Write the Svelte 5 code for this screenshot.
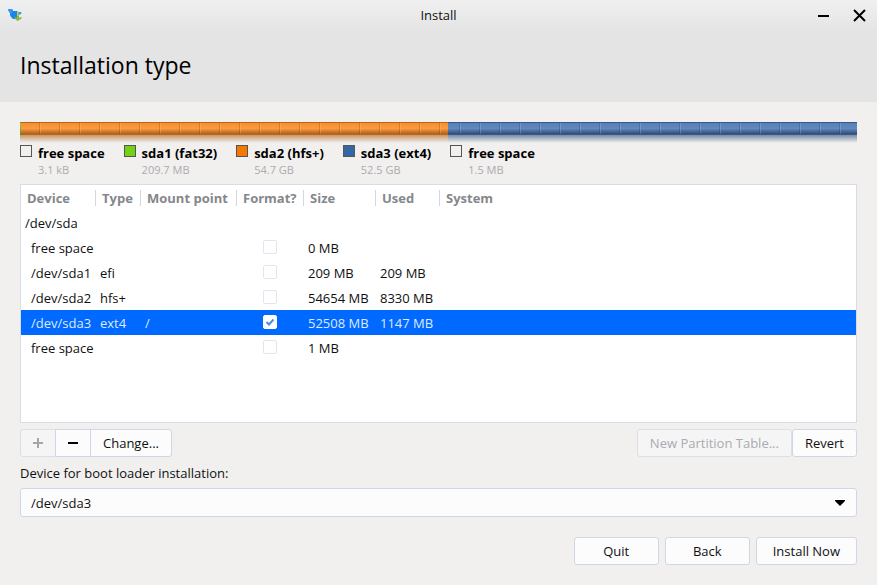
<script>
  const segments = [
    { name: 'sda1', kind: 'green', share: 1 },
    { name: 'sda2', kind: 'orange', share: 427 },
    { name: 'sda3', kind: 'blue', share: 409 }
  ];
  const legend = [
    { name: 'free space', size: '3.1 kB', color: 'transparent' },
    { name: 'sda1 (fat32)', size: '209.7 MB', color: '#73d216' },
    { name: 'sda2 (hfs+)', size: '54.7 GB', color: '#f57900' },
    { name: 'sda3 (ext4)', size: '52.5 GB', color: '#3465a4' },
    { name: 'free space', size: '1.5 MB', color: 'transparent' }
  ];
  const columns = ['Device', 'Type', 'Mount point', 'Format?', 'Size', 'Used', 'System'];
  let rows = $state([
    { device: 'free space', type: '', mount: '', format: false, size: '0 MB', used: '' },
    { device: '/dev/sda1', type: 'efi', mount: '', format: false, size: '209 MB', used: '209 MB' },
    { device: '/dev/sda2', type: 'hfs+', mount: '', format: false, size: '54654 MB', used: '8330 MB' },
    { device: '/dev/sda3', type: 'ext4', mount: '/', format: true, size: '52508 MB', used: '1147 MB' },
    { device: 'free space', type: '', mount: '', format: false, size: '1 MB', used: '' }
  ]);
  let selected = $state(3);
  let bootDevice = $state('/dev/sda3');
</script>

<div class="window">
  <header>
    <div class="titlebar">
      <svg class="logo" width="16" height="16" viewBox="0 0 16 16" aria-hidden="true">
        <path d="M1 3l1-1h3l1 2h4l1 1v6l-3 1H6L4 10 3 8 3 6z" fill="#1b84ee" />
        <path d="M1 3l1-1h3l1 2-2 3-1-1z" fill="#2f98f6" />
        <path d="M11 5h3.5l-.5 2-2 1-1 2z" fill="#3f9fc8" />
        <path d="M10 5h1.500v6H10z" fill="#c6d350" />
        <path d="M7 10.500h3V9h2v1.500l3-.5-1 2-2 1-1 1-2-1z" fill="#92b83a" />
      </svg>
      <span class="caption">Install</span>
      <div class="controls">
        <button aria-label="Minimize">
          <svg width="13" height="13" viewBox="0 0 13 13"><path d="M1 7h11" stroke="#000" stroke-width="2" /></svg>
        </button>
        <button aria-label="Close">
          <svg width="13" height="13" viewBox="0 0 13 13"><path d="M1 1l11 11M12 1L1 12" stroke="#000" stroke-width="2" /></svg>
        </button>
      </div>
    </div>
    <h1>Installation type</h1>
  </header>

  <main>
    <div class="disk">
      {#each segments as s (s.name)}
        <div class="segment {s.kind}" style="flex-grow: {s.share}">
          <div class="face"></div>
          <div class="reflection"></div>
        </div>
      {/each}
      <div class="ticks"></div>
    </div>

    <ul class="legend">
      {#each legend as item}
        <li>
          <span class="swatch" style="background: {item.color}"></span>
          <div>
            <div class="name">{item.name}</div>
            <div class="amount">{item.size}</div>
          </div>
        </li>
      {/each}
    </ul>

    <div class="list">
      <table>
        <colgroup>
          <col class="c-device" /><col class="c-type" /><col class="c-mount" /><col class="c-format" />
          <col class="c-size" /><col class="c-used" /><col />
        </colgroup>
        <thead>
          <tr>
            {#each columns as c}<th scope="col"><span>{c}</span></th>{/each}
          </tr>
        </thead>
        <tbody>
          <tr><td colspan="7">/dev/sda</td></tr>
          {#each rows as row, i}
            <tr class:selected={i === selected} onclick={() => (selected = i)}>
              <td class="child">{row.device}</td>
              <td>{row.type}</td>
              <td>{row.mount}</td>
              <td class="tick"><input type="checkbox" aria-label="Format {row.device}" bind:checked={row.format} /></td>
              <td>{row.size}</td>
              <td>{row.used}</td>
              <td></td>
            </tr>
          {/each}
        </tbody>
      </table>
    </div>

    <div class="tools">
      <div class="joined">
        <button class="btn square" disabled aria-label="Add partition">
          <svg width="12" height="12" viewBox="0 0 12 12"><path d="M1 6h10M6 1v10" stroke="#a5a5aa" stroke-width="2" /></svg>
        </button>
        <button class="btn square" aria-label="Remove partition">
          <svg width="12" height="12" viewBox="0 0 12 12"><path d="M1 6h10" stroke="#000" stroke-width="2" /></svg>
        </button>
        <button class="btn">Change...</button>
      </div>
      <div class="right">
        <button class="btn" disabled>New Partition Table...</button>
        <button class="btn">Revert</button>
      </div>
    </div>

    <label for="boot">Device for boot loader installation:</label>
    <div class="combo">
      <select id="boot" bind:value={bootDevice}>
        <option>/dev/sda3</option>
        <option>/dev/sda</option>
        <option>/dev/sda1</option>
        <option>/dev/sda2</option>
      </select>
      <svg width="10" height="6" viewBox="0 0 10 6" aria-hidden="true"><path d="M0 0h10v1L5 6 0 1z" fill="#000" /></svg>
    </div>

    <footer>
      <button class="btn wide">Quit</button>
      <button class="btn wide">Back</button>
      <button class="btn wide">Install Now</button>
    </footer>
  </main>
</div>

<style>
  :global(body) {
    margin: 0;
    background: #f1f0ee;
  }
  .window {
    min-height: 100vh;
    box-sizing: border-box;
    background: #f1f0ee;
    color: #101010;
    font: 13px/18px "Open Sans", "Noto Sans", sans-serif;
  }
  button,
  select {
    font: inherit;
    color: inherit;
  }
  header {
    background: linear-gradient(#f0f0f0, #e4e4e4 32px);
    padding-bottom: 20px;
  }
  .titlebar {
    display: grid;
    grid-template-columns: 1fr auto 1fr;
    align-items: center;
    height: 30px;
    padding: 0 11px 0 7px;
  }
  .caption {
    padding-left: 4px;
  }
  .controls {
    display: flex;
    justify-content: flex-end;
    gap: 23px;
  }
  .controls button {
    display: flex;
    padding: 0;
    border: 0;
    background: none;
  }
  h1 {
    margin: 19px 20px 0;
    font-size: 23px;
    line-height: 33px;
    font-weight: 400;
    color: #000;
  }
  main {
    padding: 20px 20px 0;
  }
  .disk {
    position: relative;
    display: flex;
  }
  .segment {
    flex: 0 1 0;
  }
  .face {
    box-sizing: border-box;
    height: 13px;
    border-top: 1px solid;
    border-bottom: 1px solid;
  }
  .reflection {
    height: 8px;
  }
  .green .face {
    background: linear-gradient(#73d216, #3d8505);
    border-color: #4e9a06;
  }
  .orange .face {
    background: linear-gradient(#f78f2a, #fa9a42 50%, #b05f14);
    border-color: #b9651a #7a3d04;
  }
  .blue .face {
    background: linear-gradient(#5580b8, #6189bd 50%, #2f4d79);
    border-color: #375987 #1b2f4f;
  }
  .green .reflection {
    background: linear-gradient(#5a9a30aa, #73a94d00);
  }
  .orange .reflection {
    background: linear-gradient(#b56926aa, #e8a06000);
  }
  .blue .reflection {
    background: linear-gradient(#3a5884aa, #7c94b800);
  }
  .ticks {
    position: absolute;
    inset: 1px 0 9px;
    background: linear-gradient(90deg, #ffffff28 0 1px, transparent 1px 19px, #00000028 19px 20px) 0 0 / 20px 100%;
  }
  .legend {
    display: flex;
    gap: 19px;
    margin: 1px 0 0;
    padding: 0;
    list-style: none;
  }
  .legend li {
    display: flex;
    gap: 6px;
  }
  .swatch {
    box-sizing: border-box;
    width: 12px;
    height: 12px;
    margin-top: 1px;
    border: 1px solid #555;
  }
  .name {
    font-weight: 700;
    color: #000;
  }
  .amount {
    font-size: 11px;
    line-height: 16px;
    color: #aaabae;
  }
  .list {
    box-sizing: border-box;
    min-height: 239px;
    margin-top: 6px;
    border: 1px solid #d9dce4;
    background: #fff;
  }
  table {
    width: 100%;
    table-layout: fixed;
    border-collapse: collapse;
  }
  .c-device { width: 75px; }
  .c-type { width: 45px; }
  .c-mount { width: 96px; }
  .c-format { width: 67px; }
  .c-size { width: 72px; }
  .c-used { width: 64px; }
  th,
  td {
    height: 25px;
    padding: 0;
    text-align: left;
    white-space: nowrap;
  }
  th {
    color: #85878b;
  }
  th span {
    display: block;
    height: 16px;
    line-height: 16px;
    padding-left: 6px;
    border-right: 1px solid #d8d8dc;
  }
  th:last-child span {
    border-right: 0;
  }
  td {
    padding-left: 4px;
  }
  td.child {
    padding-left: 10px;
  }
  td.tick {
    padding: 0 2px 2px 0;
    height: 23px;
  }
  .selected {
    background: #0069ff;
    color: #dfeaff;
  }
  input {
    appearance: none;
    display: block;
    box-sizing: border-box;
    width: 14px;
    height: 14px;
    margin: 0 auto;
    border: 1px solid #e2e4ee;
    border-radius: 2px;
    background: #fff;
  }
  input:checked {
    background: #fff url("data:image/svg+xml,%3Csvg xmlns='http://www.w3.org/2000/svg' viewBox='0 0 12 12'%3E%3Cpath d='M2.5 6l2.5 2.5 4.5-5' fill='none' stroke='%234a8ddc' stroke-width='2'/%3E%3C/svg%3E");
    border-color: #fff;
  }
  .tools {
    display: flex;
    justify-content: space-between;
    margin-top: 6px;
  }
  .joined,
  .right {
    display: flex;
  }
  .btn {
    display: flex;
    align-items: center;
    justify-content: center;
    box-sizing: border-box;
    height: 28px;
    padding: 0 12px;
    border: 1px solid #cfd6e6;
    border-radius: 3px;
    background: #fcfcfc;
  }
  .btn:disabled {
    color: #a9abb1;
    background: #f5f5f5;
    border-color: #dcdfe9;
  }
  .joined .btn {
    border-radius: 0;
  }
  .joined .btn + .btn {
    margin-left: -1px;
  }
  .joined .btn:first-child {
    border-radius: 3px 0 0 3px;
  }
  .joined .btn:last-child {
    border-radius: 0 3px 3px 0;
  }
  .square {
    width: 36px;
    padding: 0;
  }
  label {
    display: block;
    margin: 7px 0 6px;
  }
  .combo {
    display: grid;
    align-items: center;
  }
  .combo > * {
    grid-area: 1 / 1;
  }
  .combo svg {
    justify-self: end;
    margin-right: 12px;
    pointer-events: none;
  }
  select {
    appearance: none;
    width: 100%;
    height: 29px;
    padding: 0 10px;
    border: 1px solid #cfd6e6;
    border-radius: 3px;
    background: #fcfcfc;
  }
  footer {
    display: flex;
    justify-content: flex-end;
    gap: 6px;
    margin: 20px 0;
  }
  .wide {
    min-width: 85px;
    padding: 0 16px;
  }
</style>
